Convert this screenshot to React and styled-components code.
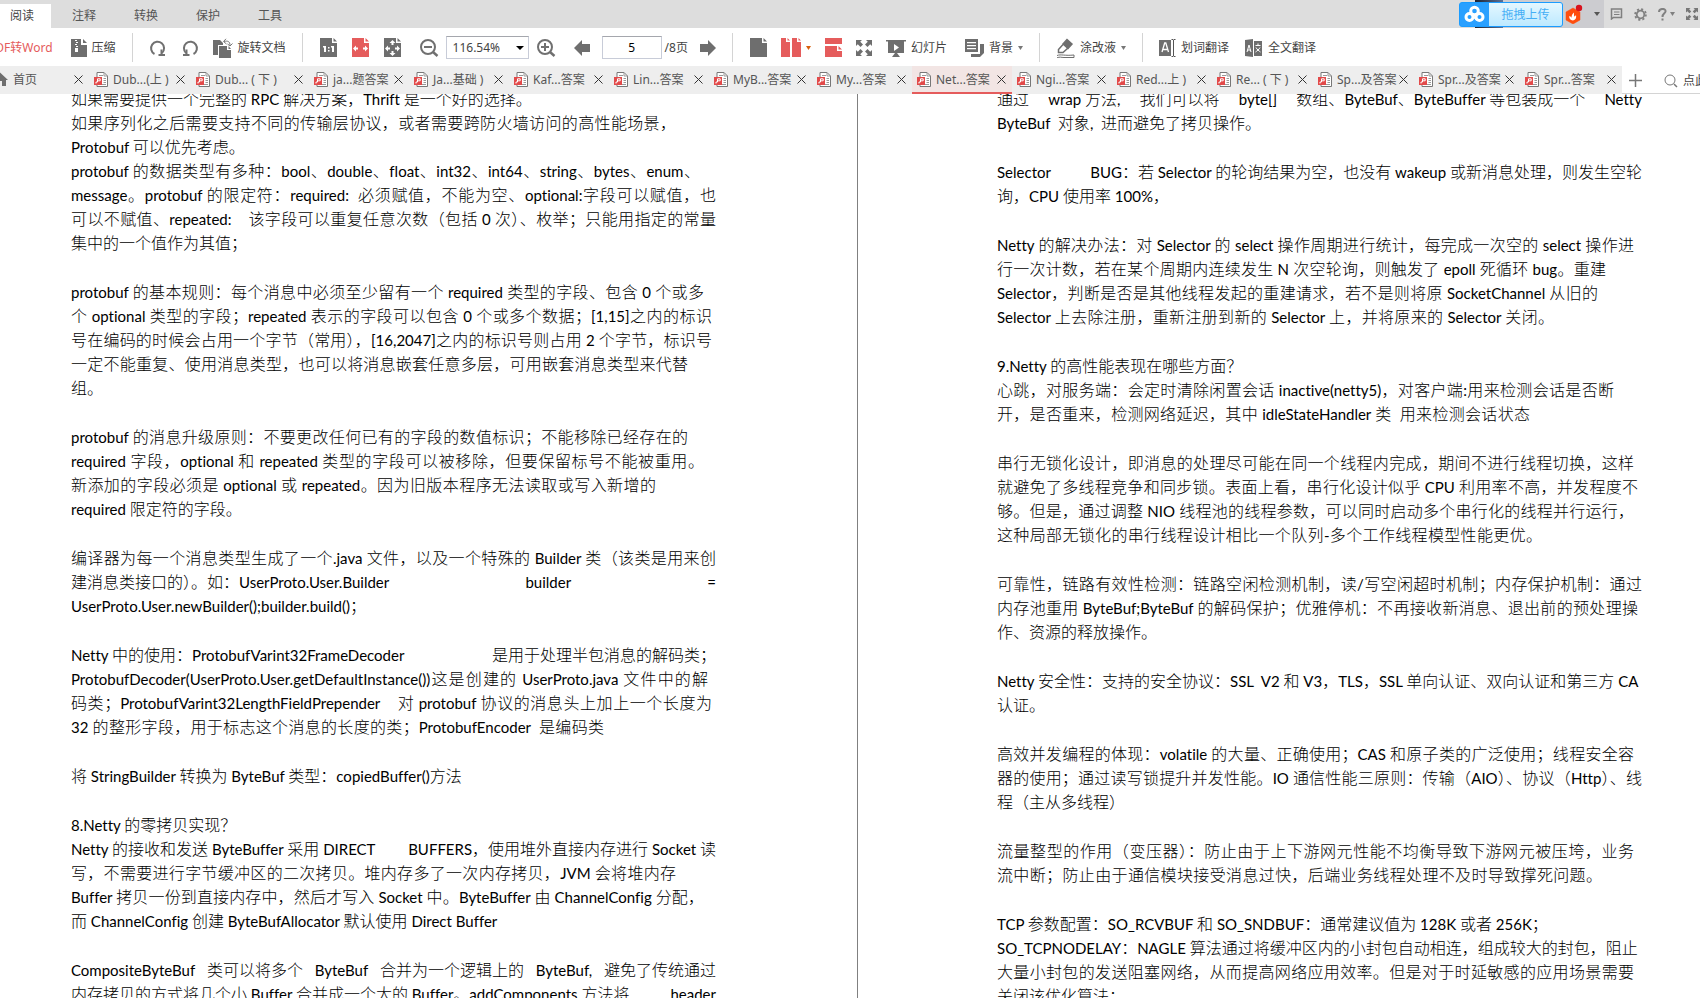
import React, { useState } from 'react';
import styled, { createGlobalStyle } from 'styled-components';

const GlobalStyle = createGlobalStyle`
  * {
    box-sizing: border-box;
  }

  body {
    margin: 0;
    overflow: hidden;
    background: #fff;
    color: #444;
    font: 12px/18px 'Noto Sans', 'Noto Sans CJK SC', sans-serif;
  }

  button,
  input,
  select {
    margin: 0;
    padding: 0;
    border: 0;
    background: none;
    color: inherit;
    font: inherit;
  }

  svg {
    display: block;
    flex: none;
  }
`;

const Window = styled.div`
  display: flex;
  flex-direction: column;
  height: 100vh;
  overflow: hidden;
`;

/* menu bar */

const MenuBar = styled.header`
  display: flex;
  justify-content: space-between;
  height: 28px;
  flex: none;
  background: #ddd;
`;

const Menus = styled.nav`
  display: flex;
  align-items: flex-end;
`;

const MenuButton = styled.button`
  width: 62px;
  height: 24px;
  color: #555;

  &:first-child {
    width: 51px;
    margin-right: 2px;
    padding-right: 7px;
  }

  ${({ $active }) => $active && 'background: #fff; color: #444;'}
`;

const WindowTools = styled.div`
  display: flex;
  align-items: center;
  color: #808080;
`;

const Account = styled.div`
  position: relative;
  display: flex;
  align-items: center;
  justify-content: space-between;
  width: 129px;
  height: 28px;
  margin-right: 6px;
  padding-right: 4px;
  background: #ccccd0;
`;

const Avatar = styled.span`
  width: 28px;
  height: 28px;
  background: linear-gradient(90deg, #1d2433, #5b7096);
`;

const AccountIcons = styled.span`
  display: flex;
  align-items: center;
  gap: 11px;
`;

const UploadButton = styled.button`
  position: absolute;
  top: 2px;
  right: 41px;
  display: flex;
  align-items: center;
  width: 104px;
  height: 25px;
  overflow: hidden;
  border: 1px solid #1b9cff;
  border-radius: 3px;
  background: #2aa0ff;
  color: #45aef5;

  svg {
    width: 29px;
  }

  span {
    flex: 1;
    line-height: 23px;
    background: linear-gradient(#e4f7ff, #bde9ff);
  }
`;

const WindowIcons = styled.div`
  display: flex;
  align-items: center;
  gap: 11px;
  padding-right: 2px;

  button {
    display: flex;
    align-items: center;
    gap: 3px;
  }
`;

/* toolbar */

const Toolbar = styled.div`
  display: flex;
  align-items: center;
  flex: none;
  height: 38px;
  padding-top: 1px;
  overflow: hidden;
  color: #444;
`;

const Group = styled.div`
  display: flex;
  align-items: center;
  flex: none;
  gap: ${({ $gap = 14 }) => $gap}px;
  margin-left: ${({ $lead = 0 }) => $lead}px;
`;

const ToolButton = styled.button`
  display: flex;
  align-items: center;
  gap: 5px;
  height: 24px;
  white-space: nowrap;
  color: ${({ $accent }) => ($accent ? '#e55c5c' : '#444')};
`;

const ConvertButton = styled(ToolButton)`
  margin-left: -12px;
`;

const Separator = styled.span`
  flex: none;
  width: 1px;
  height: 29px;
  margin: 0 16px;
  background: #d4d4d4;
`;

const SelectBox = styled.span`
  position: relative;

  select {
    display: block;
    width: 83px;
    height: 23px;
    padding-left: 6px;
    border: 1px solid #c8ccd8;
    border-top-color: #a5a7ad;
    background: #fff;
    appearance: none;
  }

  svg {
    position: absolute;
    top: 10px;
    right: 5px;
    color: #000;
    pointer-events: none;
  }
`;

const PageBox = styled.label`
  display: flex;
  align-items: center;
  gap: 3px;

  input {
    width: 60px;
    height: 23px;
    border: 1px solid #c8ccd8;
    border-top-color: #a5a7ad;
    color: #000;
    text-align: center;
  }
`;

/* document tabs */

const TabBar = styled.div`
  display: flex;
  flex: none;
  height: 28px;
`;

const Tab = styled.div`
  display: flex;
  align-items: center;
  flex: ${({ $size }) => `${$size} 1 ${$size}px`};
  min-width: 0;
  padding: 0 6px 0 5px;
  border-bottom: 2px solid ${({ $active }) => ($active ? '#e55c5c' : '#eee')};
  background: ${({ $active }) => ($active ? '#f2e5e4' : '#eee')};
  color: #555;
`;

const HomeTab = styled(Tab)`
  padding-left: 0;
`;

const TabTitle = styled.button`
  display: flex;
  align-items: center;
  flex: 1;
  gap: 5px;
  min-width: 0;
  height: 26px;
  white-space: nowrap;

  span {
    padding-top: 2px;
  }
`;

const TabClose = styled.button`
  color: #333;
`;

const TabTools = styled.div`
  display: flex;
  align-items: center;
  flex: 0 0 78px;
  gap: 22px;
  padding: 2px 0 0 7px;
  overflow: hidden;
  border-bottom: 1px solid #d4d4d4;
`;

const SearchBox = styled.label`
  display: flex;
  align-items: center;
  flex: none;
  gap: 5px;

  input {
    width: 80px;
  }

  input::placeholder {
    color: #444;
    opacity: 1;
  }
`;

/* pages */

const Pages = styled.main`
  display: grid;
  grid-template-columns: 858fr 842fr;
  flex: 1;
  min-height: 0;
  overflow: hidden;
`;

const Page = styled.article`
  min-width: 0;
  overflow: hidden;
  padding: ${({ $left }) => ($left ? '0 141px 0 71px' : '0 58px 0 139px')};
  border-right: ${({ $left }) => ($left ? '1px solid #808080' : 'none')};
`;

const PageText = styled.div`
  display: flex;
  flex-direction: column;
  gap: 25px;
  margin-top: -7px;
  color: #000;
  font-family: Lato, 'Noto Sans CJK SC', sans-serif;
  font-size: 16px;
  font-weight: 300;
  font-variant-ligatures: none;
  line-height: 24px;
`;

const Paragraph = styled.p`
  margin: 0;
`;

const Line = styled.span`
  display: block;
  height: 24px;
  white-space: nowrap;
  text-align-last: ${({ $justify }) => ($justify ? 'justify' : 'left')};
  padding-right: ${({ $inset = 0 }) => $inset}px;
`;

const SpreadLine = styled.span`
  display: flex;
  justify-content: space-between;
  height: 24px;
  white-space: nowrap;
`;

const Latin = styled.span`
  font-size: 15px;
  font-weight: 400;
`;

/* icons */

const Caret = ({ color = 'currentColor', size = 5 }) => (
  <svg width={size} height="4" viewBox="0 0 8 4" preserveAspectRatio="none">
    <path d="M0 0h8L4 4z" fill={color} />
  </svg>
);

const ZipIcon = () => (
  <svg width="16" height="18" viewBox="0 0 16 18" fill="#6e6e6e">
    <path d="M0 0h10v6h6v12H0z" />
    <path d="M12 0l4 4h-4z" />
    <path d="M4 1h2v1H4zM5 3h2v1H5zM4 5h2v1H4zM5 7h2v1H5zM4 9h3v4H4z" fill="#fff" />
  </svg>
);

const RotateIcon = ({ flip }) => (
  <svg width="18" height="18" viewBox="0 0 18 18" fill="none" stroke="#707070" strokeWidth="2">
    <g transform={flip ? 'translate(18 0) scale(-1 1)' : undefined}>
      <path d="M5.500 15A6.500 6.500 0 1 1 13 14" />
      <path d="M9.500 16h6.500M12.500 10.500V16" />
    </g>
  </svg>
);

const RotateDocIcon = () => (
  <svg width="20" height="20" viewBox="0 0 20 20" fill="#6e6e6e">
    <path d="M0 2h7l3 3v2H5v10H0z" />
    <path d="M6 8h8v4h4v8H6z" />
    <path d="M15.500 8l2.500 3h-2.500z" />
    <path d="M11 3.500c4-1 6 0 6 4M13 0.800l-2.500 2.700L13.500 6M14.500 6l2.500 2 2.500-2.500" fill="none" stroke="#777" />
  </svg>
);

const PageShape = ({ color, children }) => (
  <svg width="18" height="20" viewBox="0 0 18 20" fill={color}>
    <path d="M1 0h12v5h5v14H1z" />
    <path d="M14.500 0L18 3.500h-3.500z" />
    {children}
  </svg>
);

const ActualSizeIcon = () => (
  <PageShape color="#6e6e6e">
    <path d="M4 8h3v6H5V9.500H4zM12 8h3v6h-2V9.500h-1zM9 9h1.500v1.500H9zM9 12h1.500v1.500H9z" fill="#fff" />
  </PageShape>
);

const FitWidthIcon = () => (
  <PageShape color="#e55c5c">
    <path d="M2 10.500l3-3v2h2v2H5v2zM17 10.500l-3-3v2h-2v2h2v2z" fill="#fff" />
  </PageShape>
);

const FitPageIcon = () => (
  <PageShape color="#6e6e6e">
    <path
      d="M2 10.500l3-3v2h2v2H5v2zM17 10.500l-3-3v2h-2v2h2v2zM9.500 2l3 3h-2v2h-2V5h-2zM9.500 18l3-3h-2v-2h-2v2h-2z"
      fill="#fff"
    />
  </PageShape>
);

const ZoomIcon = ({ plus }) => (
  <svg width="20" height="20" viewBox="0 0 20 20" fill="none" stroke="#707070" strokeWidth="2">
    <circle cx="9" cy="9" r="7" />
    <path d="M14 14l4.500 4" strokeWidth="2.500" />
    <path d={plus ? 'M5 9h8M9 5v8' : 'M5 9h8'} />
  </svg>
);

const ArrowIcon = ({ right }) => (
  <svg width="16" height="16" viewBox="0 0 16 16" fill="#6e6e6e">
    <path d={right ? 'M16 8L8 0v4H0v8h8v4z' : 'M0 8l8-8v4h8v8H8v4z'} />
  </svg>
);

const TwoPagesIcon = () => (
  <svg width="20" height="19" viewBox="0 0 20 19" fill="#e55c5c">
    <path d="M0 0h5v4h4v15H0zM11 0h5v4h4v15h-9zM6.500 0L9 2.500H6.500zM17.500 0L20 2.500h-2.500z" />
  </svg>
);

const ContinuousIcon = () => (
  <svg width="17" height="19" viewBox="0 0 17 19" fill="#e55c5c">
    <path d="M0 0h17v6H0zM0 8h12v5h5v6H0zM13.500 8L17 11.500h-3.500z" />
  </svg>
);

const ExpandIcon = ({ size = 16, color = '#6e6e6e' }) => (
  <svg width={size} height={size} viewBox="0 0 16 16" fill={color}>
    <path d="M0 0h6L4.200 1.800 7 4.500 4.500 7 1.800 4.200 0 6zM16 0h-6l1.800 1.800L9 4.500 11.500 7l2.700-2.800L16 6zM0 16h6l-1.800-1.800L7 11.500 4.500 9l-2.700 2.800L0 10zM16 16h-6l1.800-1.800L9 11.500 11.500 9l2.700 2.800L16 10z" />
  </svg>
);

const SlidesIcon = () => (
  <svg width="20" height="18" viewBox="0 0 20 18" fill="#6e6e6e">
    <path d="M0 1h20v1.500h-2V14H2V2.500H0zM9 14h2l3 4H6z" />
    <path d="M8 5l5 3.500L8 12z" fill="#fff" />
  </svg>
);

const BackgroundIcon = () => (
  <svg width="19" height="18" viewBox="0 0 19 18" fill="#6e6e6e">
    <path d="M0 0h13v13H0zM15 5h4v9l-4 4H6v-3h9z" />
    <path d="M2 3h9v1.300H2zM2 6h9v1.300H2zM2 9h9v1.300H2z" fill="#fff" />
  </svg>
);

const EraserIcon = () => (
  <svg width="19" height="20" viewBox="0 0 19 20" fill="none" stroke="#6e6e6e">
    <path d="M11 1.500l5 4.500-4 4.500-5-4.500z" fill="#6e6e6e" strokeWidth="1.500" />
    <path d="M7 6.500l-4.500 5v3h4.500l5-4.500" strokeWidth="1.500" />
    <path d="M1 17.500c4-1.500 8 .500 17-.500v2.500H8c-3 0-4-1-7 .300" />
  </svg>
);

const WordTranslateIcon = () => (
  <svg width="17" height="18" viewBox="0 0 17 18" fill="#6e6e6e">
    <path d="M0 1h12v16H0z" />
    <path d="M3 13l2.700-9h1.100L9.500 13M4 10.500h4.500" fill="none" stroke="#fff" strokeWidth="1.300" />
    <path d="M12.500.500h1.500l.500 1 .500-1h1.500M14.500 1v16M12.500 17.500h1.500l.500-1 .500 1h1.500" fill="none" stroke="#555" />
  </svg>
);

const FullTranslateIcon = () => (
  <svg width="18" height="18" viewBox="0 0 18 18" fill="#6e6e6e">
    <path d="M0 1l8-1v18l-8-1zM9 2h8v15H9z" />
    <path d="M2 13l2-7 2 7M2.500 11h3M10.500 6.500h5M13 4.500v2M11 8.500c1 2 3 3.500 4.500 4.500M15 8.500c-1 2-3 3.500-4.500 4.500" fill="none" stroke="#fff" />
  </svg>
);

const HomeIcon = () => (
  <svg width="8" height="15" viewBox="8 0 8 15" fill="#6e6e6e">
    <path d="M7.500 0L16 8h-2v6h-4V9H7z" />
  </svg>
);

const PdfIcon = () => (
  <svg width="14" height="15" viewBox="0 0 14 15">
    <path d="M3 .500h7l3.500 3.500v10.500H3z" fill="#fff" stroke="#777" />
    <path d="M10 .500V4h3.500M5 3.500h4M9.500 6.500h2.500M9.500 8.500h2.500M9.500 10.500h2.500M5 12.500h7" fill="none" stroke="#999" />
    <path d="M0 5h8v8H0z" fill="#e24a4a" />
    <path d="M2 11.500V10h1.500M3.500 10V6.800h2.700v2H3.500" fill="none" stroke="#fff" />
  </svg>
);

const CloseIcon = () => (
  <svg width="9" height="9" viewBox="0 0 9 9" stroke="currentColor">
    <path d="M.500.500l8 8M8.500.500l-8 8" />
  </svg>
);

const PlusIcon = () => (
  <svg width="13" height="13" viewBox="0 0 13 13" stroke="#777" strokeWidth="1.500">
    <path d="M6.500 0v13M0 6.500h13" />
  </svg>
);

const SearchIcon = () => (
  <svg width="14" height="14" viewBox="0 0 14 14" fill="none" stroke="#777">
    <circle cx="6" cy="6" r="5" />
    <path d="M10 10l3 3" strokeWidth="1.500" />
  </svg>
);

const CloudIcon = () => (
  <svg width="29" height="23" viewBox="0 0 29 23" fill="none" stroke="#fff" strokeWidth="3">
    <circle cx="14.500" cy="8" r="3.800" />
    <circle cx="9.500" cy="14" r="3.500" />
    <circle cx="19.500" cy="14" r="3.500" />
    <path d="M12 12l5 5" strokeWidth="2" />
  </svg>
);

const BadgeIcon = () => (
  <svg width="18" height="20" viewBox="0 0 18 20">
    <path d="M8 4l7 4v8l-7 4-7-4V8z" fill="#ff4d0d" stroke="#ff4d0d" strokeLinejoin="round" strokeWidth="0.500" />
    <path d="M8 16.500c-3-.500-4-2-3.700-4.500 1 .200 2 1 2.200 2 0-2 .500-4 2.500-5.500-.200 2 .300 3 0 4 1-.200 1.500-.700 2-1.500.700 3-.500 5-3 5.500z" fill="#fff" />
    <circle cx="14" cy="4" r="3.200" fill="#d8121d" />
  </svg>
);

const MessageIcon = () => (
  <svg width="13" height="12" viewBox="0 0 13 12" fill="none" stroke="currentColor" strokeWidth="1.500">
    <path d="M1.500 1h10v8.500h-8L1.500 11z" />
    <path d="M4 4h5.500M4 6.500h5.500" strokeWidth="1" />
  </svg>
);

const GearIcon = () => (
  <svg width="13" height="13" viewBox="0 0 13 13" fill="none" stroke="currentColor">
    <circle cx="6.500" cy="6.500" r="3.800" strokeWidth="1.800" />
    <circle cx="6.500" cy="6.500" r="5.400" strokeWidth="1.800" strokeDasharray="2.100 2.140" />
  </svg>
);

const HelpIcon = () => (
  <svg width="9" height="13" viewBox="0 0 9 13" fill="none" stroke="currentColor" strokeWidth="2">
    <path d="M1 4c0-4 7-4 6.500-.500C7.300 5.500 4.500 5.500 4.500 9M4.500 10.500v2" />
  </svg>
);

/* document content: plain strings are set ragged, arrays are spread over the whole column */

const fit = (inset, text) => ({ inset, text });

const leftPage = [
  [
    '如果需要提供一个完整的 RPC 解决方案，Thrift 是一个好的选择。',
    fit(40, '如果序列化之后需要支持不同的传输层协议，或者需要跨防火墙访问的高性能场景，'),
    'Protobuf 可以优先考虑。',
    fit(16, 'protobuf 的数据类型有多种：bool、double、float、int32、int64、string、bytes、enum、'),
    fit(0, 'message。protobuf 的限定符：required:\u00a0 必须赋值，不能为空、optional:字段可以赋值，也'),
    fit(0, '可以不赋值、repeated:\u00a0\u00a0\u00a0 该字段可以重复任意次数（包括 0 次）、枚举；只能用指定的常量'),
    '集中的一个值作为其值；',
  ],
  [
    fit(12, 'protobuf 的基本规则：每个消息中必须至少留有一个 required 类型的字段、包含 0 个或多'),
    fit(4, '个 optional 类型的字段；repeated 表示的字段可以包含 0 个或多个数据；[1,15]之内的标识'),
    fit(4, '号在编码的时候会占用一个字节（常用），[16,2047]之内的标识号则占用 2 个字节，标识号'),
    fit(28, '一定不能重复、使用消息类型，也可以将消息嵌套任意多层，可用嵌套消息类型来代替'),
    '组。',
  ],
  [
    fit(28, 'protobuf 的消息升级原则：不要更改任何已有的字段的数值标识；不能移除已经存在的'),
    fit(12, 'required 字段，optional 和 repeated 类型的字段可以被移除，但要保留标号不能被重用。'),
    fit(60, '新添加的字段必须是 optional 或 repeated。因为旧版本程序无法读取或写入新增的'),
    'required 限定符的字段。',
  ],
  [
    fit(0, '编译器为每一个消息类型生成了一个.java 文件，以及一个特殊的 Builder 类（该类是用来创'),
    ['建消息类接口的）。如：UserProto.User.Builder', 'builder', '='],
    'UserProto.User.newBuilder();builder.build()；',
  ],
  [
    ['Netty 中的使用：ProtobufVarint32FrameDecoder', '是用于处理半包消息的解码类；'],
    fit(8, 'ProtobufDecoder(UserProto.User.getDefaultInstance())这是创建的 UserProto.java 文件中的解'),
    fit(4, '码类；ProtobufVarint32LengthFieldPrepender\u00a0\u00a0\u00a0 对 protobuf 协议的消息头上加上一个长度为'),
    fit(112, '32 的整形字段，用于标志这个消息的长度的类；ProtobufEncoder\u00a0 是编码类'),
  ],
  ['将 StringBuilder 转换为 ByteBuf 类型：copiedBuffer()方法'],
  [
    '8.Netty 的零拷贝实现？',
    ['Netty 的接收和发送 ByteBuffer 采用 DIRECT', 'BUFFERS，使用堆外直接内存进行 Socket 读'],
    fit(40, '写，不需要进行字节缓冲区的二次拷贝。堆内存多了一次内存拷贝，JVM 会将堆内存'),
    fit(12, 'Buffer 拷贝一份到直接内存中，然后才写入 Socket 中。ByteBuffer 由 ChannelConfig 分配，'),
    '而 ChannelConfig 创建 ByteBufAllocator 默认使用 Direct Buffer',
  ],
  [
    ['CompositeByteBuf', '类可以将多个', 'ByteBuf', '合并为一个逻辑上的', 'ByteBuf,', '避免了传统通过'],
    ['内存拷贝的方式将几个小 Buffer 合并成一个大的 Buffer。addComponents 方法将', 'header'],
  ],
];

const rightPage = [
  [
    ['通过', 'wrap 方法,', '我们可以将', 'byte[]', '数组、ByteBuf、ByteBuffer 等包装成一个', 'Netty'],
    'ByteBuf\u00a0 对象,\u00a0 进而避免了拷贝操作。',
  ],
  [
    ['Selector', 'BUG：若 Selector 的轮询结果为空，也没有 wakeup 或新消息处理，则发生空轮'],
    '询，CPU 使用率 100%，',
  ],
  [
    fit(8, 'Netty 的解决办法：对 Selector 的 select 操作周期进行统计，每完成一次空的 select 操作进'),
    fit(36, '行一次计数，若在某个周期内连续发生 N 次空轮询，则触发了 epoll 死循环 bug。重建'),
    fit(44, 'Selector，判断是否是其他线程发起的重建请求，若不是则将原 SocketChannel 从旧的'),
    fit(88, 'Selector 上去除注册，重新注册到新的 Selector 上，并将原来的 Selector 关闭。'),
  ],
  [
    '9.Netty 的高性能表现在哪些方面？',
    fit(28, '心跳，对服务端：会定时清除闲置会话 inactive(netty5)，对客户端:用来检测会话是否断'),
    fit(112, '开，是否重来，检测网络延迟，其中 idleStateHandler 类\u00a0 用来检测会话状态'),
  ],
  [
    fit(8, '串行无锁化设计，即消息的处理尽可能在同一个线程内完成，期间不进行线程切换，这样'),
    fit(4, '就避免了多线程竞争和同步锁。表面上看，串行化设计似乎 CPU 利用率不高，并发程度不'),
    fit(8, '够。但是，通过调整 NIO 线程池的线程参数，可以同时启动多个串行化的线程并行运行，'),
    fit(100, '这种局部无锁化的串行线程设计相比一个队列-多个工作线程模型性能更优。'),
  ],
  [
    fit(0, '可靠性，链路有效性检测：链路空闲检测机制，读/写空闲超时机制；内存保护机制：通过'),
    fit(4, '内存池重用 ByteBuf;ByteBuf 的解码保护；优雅停机：不再接收新消息、退出前的预处理操'),
    '作、资源的释放操作。',
  ],
  [
    fit(4, 'Netty 安全性：支持的安全协议：SSL\u00a0 V2 和 V3，TLS，SSL 单向认证、双向认证和第三方 CA'),
    '认证。',
  ],
  [
    fit(8, '高效并发编程的体现：volatile 的大量、正确使用；CAS 和原子类的广泛使用；线程安全容'),
    fit(0, '器的使用；通过读写锁提升并发性能。IO 通信性能三原则：传输（AIO）、协议（Http）、线'),
    '程（主从多线程）',
  ],
  [
    fit(8, '流量整型的作用（变压器）：防止由于上下游网元性能不均衡导致下游网元被压垮，业务'),
    fit(40, '流中断；防止由于通信模块接受消息过快，后端业务线程处理不及时导致撑死问题。'),
  ],
  [
    'TCP 参数配置：SO_RCVBUF 和 SO_SNDBUF：通常建议值为 128K 或者 256K；',
    fit(8, 'SO_TCPNODELAY：NAGLE 算法通过将缓冲区内的小封包自动相连，组成较大的封包，阻止'),
    fit(8, '大量小封包的发送阻塞网络，从而提高网络应用效率。但是对于时延敏感的应用场景需要'),
    '关闭该优化算法；',
  ],
];

const files = [
  { title: 'Dub...(上 )', size: 102 },
  { title: 'Dub... ( 下 )', size: 118 },
  { title: 'ja...题答案', size: 100 },
  { title: 'Ja...基础 )', size: 100 },
  { title: 'Kaf...答案', size: 100 },
  { title: 'Lin...答案', size: 100 },
  { title: 'MyB...答案', size: 103 },
  { title: 'My...答案', size: 100 },
  { title: 'Net...答案', size: 100 },
  { title: 'Ngi...答案', size: 100 },
  { title: 'Red...上 )', size: 100 },
  { title: 'Re... ( 下 )', size: 101 },
  { title: 'Sp...及答案', size: 101 },
  { title: 'Spr...及答案', size: 106 },
  { title: 'Spr...答案', size: 102 },
];

const menus = ['阅读', '注释', '转换', '保护', '工具'];

const mixScripts = text =>
  text
    .split(/([\x20-\x7e\u00a0]+)/)
    .filter(Boolean)
    .map((run, i) => (/^[\x20-\x7e\u00a0]/.test(run) ? <Latin key={i}>{run}</Latin> : run));

const DocumentPage = ({ paragraphs, left }) => (
  <Page $left={left}>
    <PageText>
      {paragraphs.map((lines, i) => (
        <Paragraph key={i}>
          {lines.map((line, j) => {
            if (Array.isArray(line)) {
              return (
                <SpreadLine key={j}>
                  {line.map(part => (
                    <span key={part}>{mixScripts(part)}</span>
                  ))}
                </SpreadLine>
              );
            }
            return (
              <Line key={j} $justify={Boolean(line.text)} $inset={line.inset}>
                {mixScripts(line.text || line)}
              </Line>
            );
          })}
        </Paragraph>
      ))}
    </PageText>
  </Page>
);

const App = () => {
  const [menu, setMenu] = useState(0);
  const [active, setActive] = useState(8);

  return (
    <Window>
      <GlobalStyle />

      <MenuBar>
        <Menus>
          {menus.map((name, i) => (
            <MenuButton key={name} $active={i === menu} onClick={() => setMenu(i)}>
              {name}
            </MenuButton>
          ))}
        </Menus>
        <WindowTools>
          <Account>
            <Avatar />
            <AccountIcons>
              <BadgeIcon />
              <Caret color="#555" size={6} />
            </AccountIcons>
            <UploadButton>
              <CloudIcon />
              <span>拖拽上传</span>
            </UploadButton>
          </Account>
          <WindowIcons>
            <button aria-label="消息">
              <MessageIcon />
            </button>
            <button aria-label="设置">
              <GearIcon />
            </button>
            <button aria-label="帮助">
              <HelpIcon />
              <Caret />
            </button>
            <button aria-label="全屏">
              <ExpandIcon size={12} color="#777" />
            </button>
          </WindowIcons>
        </WindowTools>
      </MenuBar>

      <Toolbar>
        <Group $gap={18}>
          <ConvertButton $accent>PDF转Word</ConvertButton>
          <ToolButton>
            <ZipIcon />
            压缩
          </ToolButton>
        </Group>
        <Separator />
        <Group>
          <ToolButton aria-label="顺时针旋转">
            <RotateIcon />
          </ToolButton>
          <ToolButton aria-label="逆时针旋转">
            <RotateIcon flip />
          </ToolButton>
          <ToolButton>
            <RotateDocIcon />
            旋转文档
          </ToolButton>
        </Group>
        <Separator />
        <Group>
          <ToolButton aria-label="实际大小">
            <ActualSizeIcon />
          </ToolButton>
          <ToolButton aria-label="适合宽度">
            <FitWidthIcon />
          </ToolButton>
          <ToolButton aria-label="适合页面">
            <FitPageIcon />
          </ToolButton>
        </Group>
        <Group $gap={7} $lead={18}>
          <ToolButton aria-label="缩小">
            <ZoomIcon />
          </ToolButton>
          <SelectBox>
            <select aria-label="缩放比例" defaultValue="116.54%">
              <option>116.54%</option>
            </select>
            <Caret size={8} />
          </SelectBox>
          <ToolButton aria-label="放大">
            <ZoomIcon plus />
          </ToolButton>
        </Group>
        <Group $gap={12} $lead={18}>
          <ToolButton aria-label="上一页">
            <ArrowIcon />
          </ToolButton>
          <PageBox>
            <input aria-label="页码" defaultValue="5" />
            /8页
          </PageBox>
          <ToolButton aria-label="下一页">
            <ArrowIcon right />
          </ToolButton>
        </Group>
        <Separator />
        <Group>
          <ToolButton aria-label="单页">
            <PageShape color="#6e6e6e" />
          </ToolButton>
          <ToolButton aria-label="双页">
            <TwoPagesIcon />
            <Caret color="#d8600c" />
          </ToolButton>
          <ToolButton aria-label="连续">
            <ContinuousIcon />
          </ToolButton>
          <ToolButton aria-label="全屏">
            <ExpandIcon />
          </ToolButton>
          <ToolButton>
            <SlidesIcon />
            幻灯片
          </ToolButton>
        </Group>
        <Group $lead={18}>
          <ToolButton>
            <BackgroundIcon />
            背景
            <Caret color="#777" />
          </ToolButton>
        </Group>
        <Separator />
        <ToolButton>
          <EraserIcon />
          涂改液
          <Caret color="#777" />
        </ToolButton>
        <Separator />
        <Group $gap={16}>
          <ToolButton>
            <WordTranslateIcon />
            划词翻译
          </ToolButton>
          <ToolButton>
            <FullTranslateIcon />
            全文翻译
          </ToolButton>
        </Group>
      </Toolbar>

      <TabBar>
        <HomeTab $size={89}>
          <TabTitle>
            <HomeIcon />
            <span>首页</span>
          </TabTitle>
          <TabClose aria-label="关闭">
            <CloseIcon />
          </TabClose>
        </HomeTab>
        {files.map(({ title, size }, i) => (
          <Tab key={i} $size={size} $active={i === active}>
            <TabTitle onClick={() => setActive(i)}>
              <PdfIcon />
              <span>{title}</span>
            </TabTitle>
            <TabClose aria-label="关闭">
              <CloseIcon />
            </TabClose>
          </Tab>
        ))}
        <TabTools>
          <button aria-label="新建标签">
            <PlusIcon />
          </button>
          <SearchBox>
            <SearchIcon />
            <input aria-label="查找" placeholder="点此" />
          </SearchBox>
        </TabTools>
      </TabBar>

      <Pages>
        <DocumentPage paragraphs={leftPage} left />
        <DocumentPage paragraphs={rightPage} />
      </Pages>
    </Window>
  );
};

export default App;
